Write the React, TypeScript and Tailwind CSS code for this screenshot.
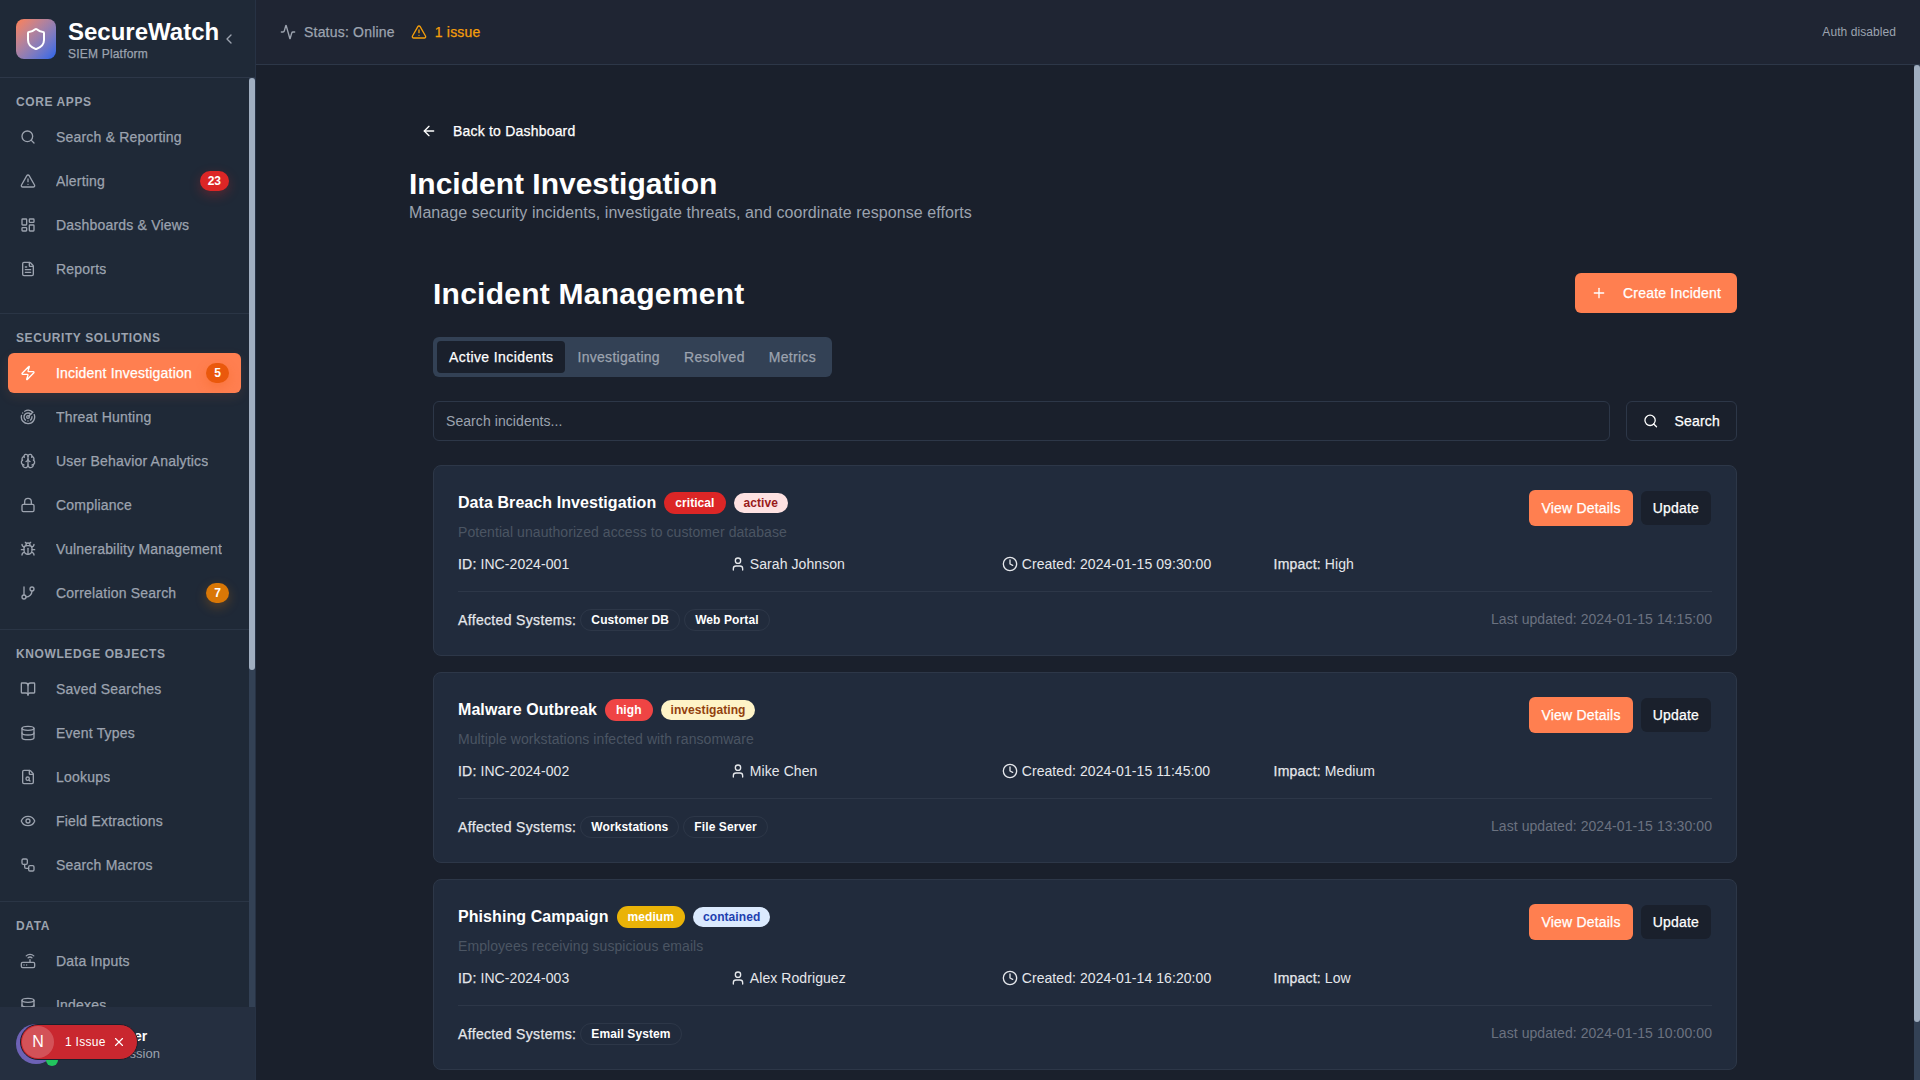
import React from "react";
import {
  Activity,
  AlertTriangle,
  ArrowLeft,
  BookOpen,
  Brain,
  Bug,
  ChevronLeft,
  Clock,
  Database,
  Eye,
  FileSearch,
  FileText,
  GitBranch,
  LayoutDashboard,
  Lock,
  Plus,
  Radar,
  Router,
  Search,
  Shield,
  User,
  Workflow,
  X,
  Zap,
} from "lucide-react";

type NavItem = {
  label: string;
  icon: React.ElementType;
  badge?: string;
  badgeClass?: string;
  active?: boolean;
};

type NavSection = { title: string; items: NavItem[]; sectionClass: string };

const sections: NavSection[] = [
  {
    title: "CORE APPS",
    sectionClass: "pb-6",
    items: [
      { label: "Search & Reporting", icon: Search },
      {
        label: "Alerting",
        icon: AlertTriangle,
        badge: "23",
        badgeClass: "bg-[#dc2626] shadow-[0_4px_12px_rgba(220,38,38,0.3)]",
      },
      { label: "Dashboards & Views", icon: LayoutDashboard },
      { label: "Reports", icon: FileText },
    ],
  },
  {
    title: "SECURITY SOLUTIONS",
    sectionClass: "pb-4",
    items: [
      {
        label: "Incident Investigation",
        icon: Zap,
        active: true,
        badge: "5",
        badgeClass: "bg-[#ea580c] shadow-[0_4px_12px_rgba(234,88,12,0.3)]",
      },
      { label: "Threat Hunting", icon: Radar },
      { label: "User Behavior Analytics", icon: Brain },
      { label: "Compliance", icon: Lock },
      { label: "Vulnerability Management", icon: Bug },
      {
        label: "Correlation Search",
        icon: GitBranch,
        badge: "7",
        badgeClass: "bg-[#d97706] shadow-[0_4px_12px_rgba(217,119,6,0.3)]",
      },
    ],
  },
  {
    title: "KNOWLEDGE OBJECTS",
    sectionClass: "pb-4",
    items: [
      { label: "Saved Searches", icon: BookOpen },
      { label: "Event Types", icon: Database },
      { label: "Lookups", icon: FileSearch },
      { label: "Field Extractions", icon: Eye },
      { label: "Search Macros", icon: Workflow },
    ],
  },
  {
    title: "DATA",
    sectionClass: "pb-4",
    items: [
      { label: "Data Inputs", icon: Router },
      { label: "Indexes", icon: Database },
    ],
  },
];

type Incident = {
  title: string;
  severity: string;
  severityClass: string;
  status: string;
  statusClass: string;
  description: string;
  id: string;
  assignee: string;
  created: string;
  impact: string;
  systems: string[];
  updated: string;
};

const incidents: Incident[] = [
  {
    title: "Data Breach Investigation",
    severity: "critical",
    severityClass: "bg-[#dc2626] text-white",
    status: "active",
    statusClass: "bg-[#fee2e2] text-[#991b1b]",
    description: "Potential unauthorized access to customer database",
    id: "INC-2024-001",
    assignee: "Sarah Johnson",
    created: "2024-01-15 09:30:00",
    impact: "High",
    systems: ["Customer DB", "Web Portal"],
    updated: "2024-01-15 14:15:00",
  },
  {
    title: "Malware Outbreak",
    severity: "high",
    severityClass: "bg-[#ef4444] text-white",
    status: "investigating",
    statusClass: "bg-[#fef3c7] text-[#92400e]",
    description: "Multiple workstations infected with ransomware",
    id: "INC-2024-002",
    assignee: "Mike Chen",
    created: "2024-01-15 11:45:00",
    impact: "Medium",
    systems: ["Workstations", "File Server"],
    updated: "2024-01-15 13:30:00",
  },
  {
    title: "Phishing Campaign",
    severity: "medium",
    severityClass: "bg-[#eab308] text-white",
    status: "contained",
    statusClass: "bg-[#dbeafe] text-[#1e40af]",
    description: "Employees receiving suspicious emails",
    id: "INC-2024-003",
    assignee: "Alex Rodriguez",
    created: "2024-01-14 16:20:00",
    impact: "Low",
    systems: ["Email System"],
    updated: "2024-01-15 10:00:00",
  },
];

// Liberation has no medium weight, this gets the reference's heavier small text
const medium = "tracking-[0.2px] [-webkit-text-stroke:0.25px]";

function Sidebar() {
  return (
    <aside className="flex h-full w-[256px] shrink-0 flex-col border-r border-[#273244] bg-[#1f2937]">
      {/* logo */}
      <div className="flex h-[78px] shrink-0 items-center border-b border-[#2d3748] pl-4 pr-[18px]">
        <div className="flex h-10 w-10 shrink-0 items-center justify-center rounded-lg bg-gradient-to-br from-[#ff7f50] to-[#2563eb]">
          <Shield className="h-6 w-6 text-white" strokeWidth={2} />
        </div>
        <div className="ml-3 min-w-0">
          <div className="mt-[3px] text-[24px] font-bold leading-[28px] tracking-normal text-white">SecureWatch</div>
          <div className={"text-xs leading-4 text-[#9ca3af] " + medium}>SIEM Platform</div>
        </div>
        <ChevronLeft className="ml-auto mt-0 h-4 w-4 shrink-0 text-[#9ca3af]" />
      </div>

      <div className="relative min-h-0 flex-1 overflow-hidden">
        <nav className="pr-[6px]">
          {sections.map((section) => (
            <div key={section.title} className={"border-b border-[#2a3545] px-2 pt-[14px] " + section.sectionClass}>
              <div className="flex h-5 items-center px-2 text-xs font-semibold tracking-[0.6px] text-[#9ca3af]">
                {section.title}
              </div>
              <div className="mt-[5px] flex flex-col gap-1">
                {section.items.map((item) => (
                  <SidebarLink key={item.label} item={item} />
                ))}
              </div>
            </div>
          ))}
        </nav>
        {/* scrollbar */}
        <div className="absolute bottom-0 right-0 top-0 w-[6px] bg-[#334155]">
          <div className="h-[592px] w-[6px] rounded-full bg-[#a0aec0]" />
        </div>
      </div>

      {/* user */}
      <div className="flex h-[73px] shrink-0 items-center gap-3 bg-[#252f40] px-4">
        <div className="relative h-10 w-10 shrink-0 rounded-full bg-[#6d62b5]">
          <span className="absolute -bottom-0.5 -right-0.5 h-3 w-3 rounded-full bg-[#22c55e]" />
        </div>
        <div className="min-w-0">
          <div className="text-sm font-semibold leading-5 text-white">Admin User</div>
          <div className="text-[13px] leading-4 text-[#9ca3af]">Current session</div>
        </div>
      </div>
    </aside>
  );
}

function SidebarLink({ item }: { item: NavItem }) {
  const Icon = item.icon;
  return (
    <div
      className={
        item.active
          ? "flex h-10 items-center rounded-md bg-[#ff7f50] px-3 text-white shadow-[0_4px_12px_rgba(255,127,80,0.1)]"
          : "flex h-10 items-center rounded-md px-3 text-[#9ca3af]"
      }
    >
      <Icon className="h-4 w-4 shrink-0" />
      <span className={"ml-5 truncate text-sm " + medium}>{item.label}</span>
      {item.badge && (
        <span
          className={
            "ml-auto flex h-5 min-w-[22px] items-center justify-center rounded-full px-2 text-xs font-bold tracking-normal text-white " +
            item.badgeClass
          }
        >
          {item.badge}
        </span>
      )}
    </div>
  );
}

function IncidentCard({ incident }: { incident: Incident }) {
  return (
    <div className="rounded-lg border border-[#2d3748] bg-[#212b3c] p-6">
      <div className="flex items-start justify-between">
        <div className="min-w-0 flex-1">
          <div className="flex h-[26px] items-center">
            <h3 className="text-base font-semibold tracking-[0.07px] text-white">{incident.title}</h3>
            <span
              className={
                "ml-2 flex h-[22px] items-center rounded-full px-[11px] text-xs font-semibold " + incident.severityClass
              }
            >
              {incident.severity}
            </span>
            <span
              className={
                "ml-2 flex h-5 items-center rounded-full px-2.5 text-xs font-semibold " + incident.statusClass
              }
            >
              {incident.status}
            </span>
          </div>
          <p className="mt-1.5 text-sm leading-5 text-[#4b5563]">{incident.description}</p>
          <div className="mt-3 grid grid-cols-4 gap-4 text-sm leading-5 text-[#e5e7eb]">
            <div>
              <span className={medium}>ID:</span> {incident.id}
            </div>
            <div className="flex items-center gap-1">
              <User className="h-4 w-4" />
              {incident.assignee}
            </div>
            <div className="flex items-center gap-1">
              <Clock className="h-4 w-4" />
              Created: {incident.created}
            </div>
            <div>
              <span className={medium}>Impact:</span> {incident.impact}
            </div>
          </div>
        </div>
        <div className="mr-px flex items-center gap-2">
          <button className={"h-9 rounded-md bg-[#ff7f50] px-3 text-sm text-white " + medium}>View Details</button>
          <button className={"h-[34px] rounded-md bg-[#1a202c] px-3 text-sm text-white " + medium}>Update</button>
        </div>
      </div>
      <div className="mt-[17px] flex items-center justify-between border-t border-[#2d3748] pt-[17px]">
        <div className="flex items-center gap-1">
          <span className="text-sm tracking-[0.34px] text-[#e5e7eb] [-webkit-text-stroke:0.25px]">Affected Systems:</span>
          {incident.systems.map((system) => (
            <span
              key={system}
              className="flex h-[22px] items-center rounded-full border border-[#2d3748] px-2.5 text-xs font-semibold tracking-[0.1px] text-white"
            >
              {system}
            </span>
          ))}
        </div>
        <span className="mb-0.5 text-sm text-[#6b7280]">Last updated: {incident.updated}</span>
      </div>
    </div>
  );
}

export default function App() {
  return (
    <div className="relative flex h-screen w-full overflow-hidden bg-[#1a202c] font-['Liberation_Sans',sans-serif] tracking-[0.07px]">
      <Sidebar />

      <div className="flex min-w-0 flex-1 flex-col">
        {/* top bar */}
        <header className="flex h-[65px] shrink-0 items-center justify-between border-b border-[#2d3748] bg-[#1f2533] pl-6 pr-6">
          <div className="flex items-center">
            <Activity className="h-4 w-4 text-[#9ca3af]" />
            <span className={"ml-2 text-sm text-[#9ca3af] " + medium}>Status: Online</span>
            <AlertTriangle className="ml-4 h-4 w-4 text-[#f59e0b]" />
            <span className={"ml-2 text-sm text-[#f59e0b] " + medium}>1 issue</span>
          </div>
          <span className="text-xs text-[#9ca3af]">Auth disabled</span>
        </header>

        <div className="relative min-h-0 flex-1 overflow-hidden">
          <main className="pr-[6px]">
            <div className="mx-auto w-[1352px] pt-12">
              <div className="flex h-9 items-center pl-[12px] text-sm text-white">
                <ArrowLeft className="h-4 w-4" />
                <span className={"ml-4 " + medium}>Back to Dashboard</span>
              </div>
              <h1 className="mt-[17px] text-[30px] font-bold leading-9 tracking-normal text-white">
                Incident Investigation
              </h1>
              <p className="mt-px text-base leading-5 text-[#9ca3af]">
                Manage security incidents, investigate threats, and coordinate response efforts
              </p>

              <div className="mt-[50px] px-6">
                <div className="flex h-10 items-center justify-between">
                  <h2 className="mt-0.5 text-[30px] font-bold leading-9 tracking-[0.25px] text-white">
                    Incident Management
                  </h2>
                  <button className={"flex h-10 items-center gap-4 rounded-md bg-[#ff7f50] px-4 text-sm text-white " + medium}>
                    <Plus className="h-4 w-4" />
                    Create Incident
                  </button>
                </div>

                <div className="mt-6 inline-flex h-10 items-center rounded-md bg-[#334155] p-1 text-sm tracking-[0.3px] [-webkit-text-stroke:0.25px]">
                  <div className="flex h-8 items-center rounded-sm bg-[#1a202c] px-3 tracking-[0.4px] text-white">
                    Active Incidents
                  </div>
                  <div className="flex h-8 items-center px-3 text-[#9ca3af]">Investigating</div>
                  <div className="flex h-8 items-center px-3 text-[#9ca3af]">Resolved</div>
                  <div className="flex h-8 items-center px-3 text-[#9ca3af]">Metrics</div>
                </div>

                <div className="mt-6 flex gap-4">
                  <div className="flex h-10 flex-1 items-center rounded-md border border-[#2d3748] bg-[#1a202c] px-3 text-sm text-[#9ca3af]">
                    Search incidents...
                  </div>
                  <button className={"flex h-10 w-[111px] items-center gap-4 rounded-md border border-[#2d3748] bg-[#1a202c] px-4 text-sm text-white " + medium}>
                    <Search className="h-4 w-4" />
                    Search
                  </button>
                </div>

                <div className="mt-6 flex flex-col gap-4">
                  {incidents.map((incident) => (
                    <IncidentCard key={incident.id} incident={incident} />
                  ))}
                </div>
              </div>
            </div>
          </main>
          {/* page scrollbar */}
          <div className="absolute bottom-0 right-0 top-0 w-[6px] bg-[#334155]">
            <div className="h-[957px] w-[6px] rounded-full bg-[#a0aec0]" />
          </div>
        </div>
      </div>

      {/* next dev indicator */}
      <div className="absolute bottom-[20px] left-[20px] flex h-[36px] w-[118px] items-center rounded-full border border-[#1a202c] bg-[#c9272f] pl-px text-white">
        <span className="flex h-8 w-8 items-center justify-center rounded-full bg-white/20 text-base">N</span>
        <span className="ml-[11px] text-xs tracking-[0.3px]">1 Issue</span>
        <X className="ml-1.5 h-3.5 w-3.5" />
      </div>
    </div>
  );
}
